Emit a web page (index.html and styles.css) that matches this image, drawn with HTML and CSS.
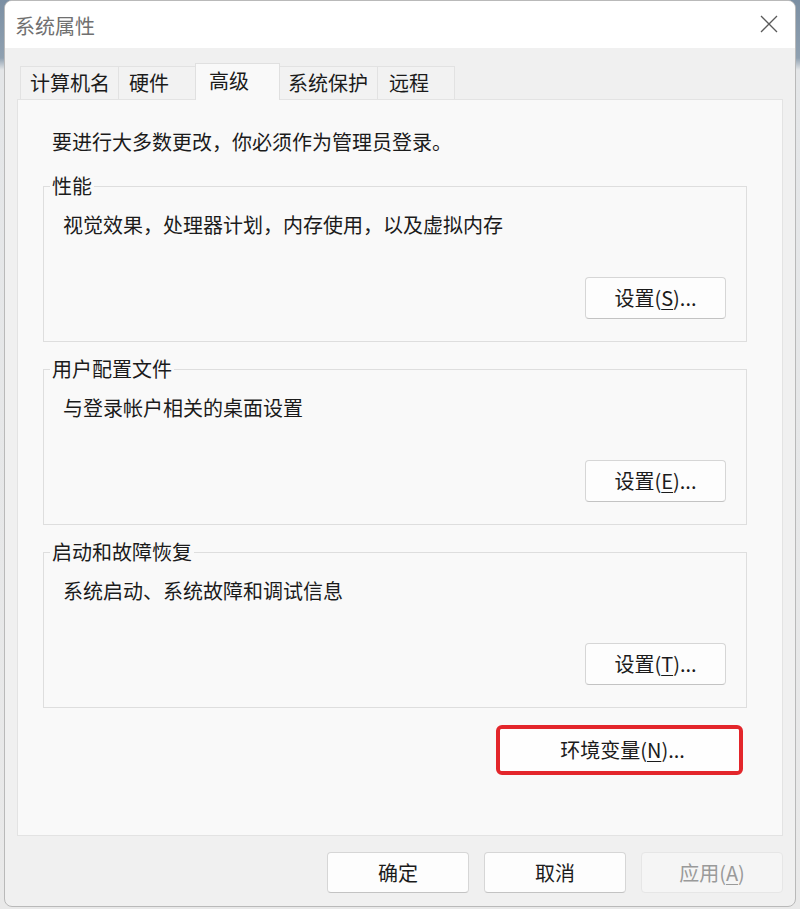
FILE: index.html
```html
<!DOCTYPE html>
<html lang="zh-CN">
<head>
<meta charset="utf-8">
<title>系统属性</title>
<link rel="stylesheet" href="styles.css">
</head>
<body>
<div class="dialog">
  <div class="titlebar">
    <span class="title">系统属性</span>
    <button class="close" aria-label="关闭">
      <svg width="18" height="18" viewBox="0 0 18 18"><path d="M1 1 L17 17 M17 1 L1 17" stroke="#5a5a5a" stroke-width="1.3" fill="none"/></svg>
    </button>
  </div>
  <div class="client">
    <div class="tabs">
      <div class="tab tab-name">计算机名</div>
      <div class="tab tab-hw">硬件</div>
      <div class="tab tab-adv active">高级</div>
      <div class="tab tab-prot">系统保护</div>
      <div class="tab tab-remote">远程</div>
    </div>
    <div class="panel">
      <p class="intro">要进行大多数更改，你必须作为管理员登录。</p>
      <fieldset class="group">
        <legend>性能</legend>
        <p class="desc">视觉效果，处理器计划，内存使用，以及虚拟内存</p>
        <div class="actions"><button class="btn">设置(<u>S</u>)...</button></div>
      </fieldset>
      <fieldset class="group">
        <legend>用户配置文件</legend>
        <p class="desc">与登录帐户相关的桌面设置</p>
        <div class="actions"><button class="btn">设置(<u>E</u>)...</button></div>
      </fieldset>
      <fieldset class="group">
        <legend>启动和故障恢复</legend>
        <p class="desc">系统启动、系统故障和调试信息</p>
        <div class="actions"><button class="btn">设置(<u>T</u>)...</button></div>
      </fieldset>
      <div class="env-row">
        <div class="highlight"><button class="btn env">环境变量(<u>N</u>)...</button></div>
      </div>
    </div>
    <div class="footer">
      <button class="btn wide">确定</button>
      <button class="btn wide">取消</button>
      <button class="btn wide disabled">应用(<u>A</u>)</button>
    </div>
  </div>
</div>
</body>
</html>
```
FILE: styles.css
```css
* { box-sizing: border-box; }

html, body {
  margin: 0;
  height: 100%;
}

body {
  background: linear-gradient(to bottom, #7b8fa3 0, #8fa0b0 58px, #e4e6e8 70px, #e9e9e9 100%);
  font-family: "Noto Sans CJK SC", "Noto Sans", sans-serif;
  font-size: 20px;
  color: #1b1b1b;
  overflow: hidden;
}

.dialog {
  margin-left: 4px;
  width: 792px;
  height: 907px;
  border: 1px solid #b9b9b9;
  border-radius: 8px;
  overflow: hidden;
  display: flex;
  flex-direction: column;
  background: #f0f0f0;
}

.titlebar {
  height: 47px;
  flex: none;
  background: #ffffff;
  display: flex;
  align-items: center;
  justify-content: space-between;
  padding: 0 17px 0 10px;
}

.title {
  color: #707070;
  line-height: 24px;
  margin-top: 3px;
}

.close {
  border: 0;
  background: transparent;
  padding: 0;
  width: 18px;
  height: 18px;
  display: block;
  margin-top: -1px;
}
.close svg { display: block; }

.client {
  flex: 1;
  display: flex;
  flex-direction: column;
  padding: 15px 12px 13px 12px;
}

.tabs {
  display: flex;
  align-items: flex-end;
  height: 36px;
  margin-left: 3px;
  position: relative;
  z-index: 1;
}

.tab {
  height: 33px;
  line-height: 32px;
  background: #f2f2f2;
  border: 1px solid #e2e2e2;
  border-bottom: 0;
  border-right: 0;
  white-space: nowrap;
  color: #1b1b1b;
}
.tab-name { width: 98px; padding-left: 9px; }
.tab-hw { width: 77px; padding-left: 10px; }
.tab-adv { width: 85px; padding-left: 13px; }
.tab-prot { width: 97px; padding-left: 8px; }
.tab-remote { width: 78px; padding-left: 11px; border-right: 1px solid #e2e2e2; }

.tab.active {
  height: 37px;
  margin-bottom: -1px;
  line-height: 34px;
  background: #f9f9f9;
  border-color: #e0e0e0;
  border-right: 1px solid #e0e0e0;
}
.tab.active + .tab { border-left: 0; }

.panel {
  flex: 1;
  background: #f9f9f9;
  border: 1px solid #e3e3e3;
  padding-top: 30px;
}

.intro {
  margin: 0 0 22px 34px;
  line-height: 24px;
}

.group {
  margin: 0 0 17px 25px;
  width: 704px;
  border: 1px solid #dedede;
  padding: 0 20px 22px 19px;
  min-width: 0;
}

.group legend {
  line-height: 20px;
  padding: 0 2px;
  margin-left: -13px;
}

.desc {
  margin: 17px 0 0 0;
  line-height: 24px;
}

.actions {
  display: flex;
  justify-content: flex-end;
  margin-top: 40px;
}

.btn {
  font-family: inherit;
  font-size: 20px;
  color: #1b1b1b;
  background: #fdfdfd;
  border: 1px solid #d6d6d6;
  border-bottom-color: #c3c3c3;
  border-radius: 4px;
  width: 141px;
  height: 42px;
  padding: 0;
  line-height: 24px;
}
.btn u { text-underline-offset: 3px; text-decoration-thickness: 1px; }

.env-row {
  display: flex;
  justify-content: flex-end;
  width: 704px;
  margin: 3px 0 0 25px;
  padding-right: 4px;
}

.highlight {
  border: 4px solid #e3262b;
  border-radius: 6px;
  background: #ffffff;
}

.btn.env {
  width: 239px;
  height: 42px;
  border: 0;
  border-radius: 2px;
  background: #fefefe;
  padding-left: 6px;
}

.footer {
  display: flex;
  justify-content: flex-end;
  gap: 15px;
  margin-top: 16px;
}

.btn.wide { width: 142px; height: 41px; }

.btn.disabled {
  background: #f5f5f5;
  border-color: #e6e6e6;
  color: #9a9a9a;
}
```
